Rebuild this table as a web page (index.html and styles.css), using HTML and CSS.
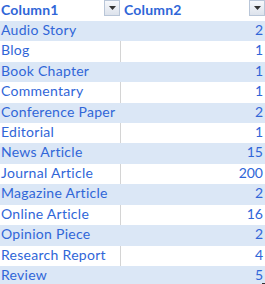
FILE: index.html
```html
<!DOCTYPE html>
<html>
<head>
<meta charset="utf-8">
<link rel="stylesheet" href="styles.css">
</head>
<body>
<div class="table">
  <div class="hcell c1"><span class="htext">Column1</span><span class="dd"><svg width="7" height="4" viewBox="0 0 7 4"><path d="M0 0H7L3.5 4Z" fill="#333"/></svg></span></div>
  <div class="hcell c2"><span class="htext">Column2</span><span class="dd"><svg width="7" height="4" viewBox="0 0 7 4"><path d="M0 0H7L3.5 4Z" fill="#333"/></svg></span></div>

  <div class="cell c1 band">Audio Story</div><div class="cell c2 num band">2</div>
  <div class="cell c1">Blog</div><div class="cell c2 num">1</div>
  <div class="cell c1 band">Book Chapter</div><div class="cell c2 num band">1</div>
  <div class="cell c1">Commentary</div><div class="cell c2 num">1</div>
  <div class="cell c1 band">Conference Paper</div><div class="cell c2 num band">2</div>
  <div class="cell c1">Editorial</div><div class="cell c2 num">1</div>
  <div class="cell c1 band">News Article</div><div class="cell c2 num band">15</div>
  <div class="cell c1">Journal Article</div><div class="cell c2 num">200</div>
  <div class="cell c1 band">Magazine Article</div><div class="cell c2 num band">2</div>
  <div class="cell c1">Online Article</div><div class="cell c2 num">16</div>
  <div class="cell c1 band">Opinion Piece</div><div class="cell c2 num band">2</div>
  <div class="cell c1">Research Report</div><div class="cell c2 num">4</div>
  <div class="cell c1 band">Review</div><div class="cell c2 num band last">5<span class="handle"></span></div>
</div>
</body>
</html>
```
FILE: styles.css
```css
html, body {
  margin: 0;
  padding: 0;
  background: #ffffff;
}
body {
  font-family: Lato, "Open Sans", sans-serif;
  font-size: 14px;
  letter-spacing: 0.28px;
  color: #3066d8;
  overflow: hidden;
}
.table {
  display: grid;
  grid-template-columns: 121px 144px;
  grid-template-rows: 20.7px repeat(13, 20.46px);
  width: 265px;
}
.hcell {
  display: flex;
  align-items: flex-start;
  justify-content: space-between;
  font-weight: bold;
  letter-spacing: 0.2px;
  background: #ffffff;
}
.hcell .htext {
  line-height: 18px;
  padding-top: 1px;
}
.hcell.c1 { padding-left: 1px; }
.hcell.c2 { padding-left: 3px; }
.dd {
  width: 16px;
  height: 16px;
  box-sizing: border-box;
  border: 1px solid #b9c6d8;
  background: linear-gradient(#f6f8fb, #dde3ec);
  display: flex;
  align-items: center;
  justify-content: center;
  margin-right: 1px;
}
.hcell.c2 .dd { margin-right: 0; }
.cell {
  line-height: 18px;
  white-space: nowrap;
  overflow: hidden;
}
.cell.c1 {
  padding-left: 1px;
  border-right: 1px solid #d4d4d4;
}
.cell.band {
  background: #dbe7f6;
}
.cell.c1.band {
  border-right-color: #dbe7f6;
}
.num {
  text-align: right;
  padding-right: 2px;
  letter-spacing: 0;
}
.last {
  position: relative;
}
.handle {
  position: absolute;
  right: 0;
  bottom: 1px;
  width: 3px;
  height: 3px;
  background: #333;
}
```
